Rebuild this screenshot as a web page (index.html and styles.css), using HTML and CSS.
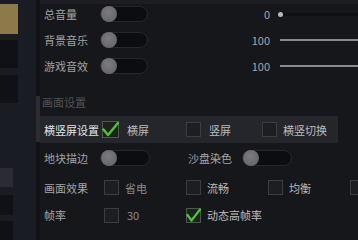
FILE: index.html
```html
<!DOCTYPE html>
<html lang="zh">
<head>
<meta charset="utf-8">
<link rel="stylesheet" href="styles.css">
</head>
<body>
<div class="app">
  <aside class="sidebar">
    <div class="tab gold"></div>
    <div class="tab dark t2"></div>
    <div class="tab dark t3"></div>
    <div class="tab small light t4"></div>
    <div class="tab small dark t5"></div>
    <div class="tab small dark t6"></div>
  </aside>
  <div class="rail"><div class="thumb"></div></div>
  <main class="main">
    <div class="row sound">
      <span class="label">总音量</span>
      <span class="toggle"><span class="knob"></span></span>
      <span class="value">0</span>
      <span class="slider"><span class="dot"></span></span>
    </div>
    <div class="row sound">
      <span class="label">背景音乐</span>
      <span class="toggle"><span class="knob"></span></span>
      <span class="value">100</span>
      <span class="slider full"></span>
    </div>
    <div class="row sound">
      <span class="label">游戏音效</span>
      <span class="toggle"><span class="knob"></span></span>
      <span class="value">100</span>
      <span class="slider full"></span>
    </div>

    <div class="section">画面设置</div>

    <div class="row orient">
      <span class="label bright">横竖屏设置</span>
      <span class="opt o1"><span class="box checked big"><svg viewBox="0 0 17 17" width="17" height="17"><path d="M1.5 8.5 L6 14 L16 2" fill="none" stroke="#52c23c" stroke-width="2.4" stroke-linecap="round" stroke-linejoin="round"/></svg></span><span class="otext bright">横屏</span></span>
      <span class="opt o2"><span class="box"></span><span class="otext bright">竖屏</span></span>
      <span class="opt o3"><span class="box"></span><span class="otext bright">横竖切换</span></span>
    </div>

    <div class="row rA">
      <span class="label">地块描边</span>
      <span class="toggle"><span class="knob"></span></span>
      <span class="label2">沙盘染色</span>
      <span class="toggle"><span class="knob"></span></span>
    </div>

    <div class="row rB">
      <span class="label">画面效果</span>
      <span class="opt q"><span class="box"></span><span class="otext dim">省电</span></span>
      <span class="opt q"><span class="box"></span><span class="otext">流畅</span></span>
      <span class="opt q"><span class="box"></span><span class="otext">均衡</span></span>
      <span class="opt q"><span class="box"></span></span>
    </div>

    <div class="row rC">
      <span class="label">帧率</span>
      <span class="opt q"><span class="box"></span><span class="otext dim n">30</span></span>
      <span class="opt q"><span class="box checked"><svg viewBox="0 0 15 15" width="15" height="15"><path d="M1.5 7 L5.5 12.5 L14 1.5" fill="none" stroke="#52c23c" stroke-width="2.2" stroke-linecap="round" stroke-linejoin="round"/></svg></span><span class="otext">动态高帧率</span></span>
    </div>
  </main>
</div>
</body>
</html>
```

FILE: styles.css
```css
* { box-sizing: border-box; }
html, body {
  margin: 0;
  padding: 0;
  width: 358px;
  height: 240px;
  overflow: hidden;
  background: #16171b;
  font-family: "Noto Sans CJK SC", "Noto Sans", sans-serif;
  font-size: 11px;
  color: #a9a9a9;
}
.app {
  display: flex;
  width: 358px;
  height: 240px;
  overflow: hidden;
}
.sidebar {
  width: 36px;
  flex: none;
  background: #1a1c23;
  display: flex;
  flex-direction: column;
  padding-top: 4px;
}
.tab { width: 18px; height: 28px; flex: none; }
.tab.gold { height: 30px; background: #8c7a4b; }
.tab.dark { background: #101116; }
.tab.small { width: 13px; }
.tab.light { background: #2a2b34; }
.t2 { margin-top: 6px; }
.t3 { margin-top: 7px; }
.t4 { margin-top: 65px; height: 19px; }
.t5 { margin-top: 8px; height: 20px; }
.t6 { margin-top: 6px; height: 19px; }

.rail {
  width: 4px;
  flex: none;
  background: #111216;
  padding-top: 96px;
}
.thumb {
  width: 4px;
  height: 46px;
  background: #2a2c32;
}

.main {
  flex: 1;
  min-width: 0;
  overflow: hidden;
  background: linear-gradient(#1d1e23 0 4px, #16171b 4px);
  padding-top: 1px;
}
.row {
  display: flex;
  align-items: center;
  padding-left: 4px;
  overflow: hidden;
}
.label {
  width: 56px;
  flex: none;
  white-space: nowrap;
  color: #a3a3a3;
}
.bright { color: #e4e4e4; }

.sound { height: 26px; }
.toggle {
  width: 48px;
  height: 16px;
  flex: none;
  border-radius: 8px;
  background: #0c0d10;
  border: 1px solid #26282d;
  display: flex;
  align-items: center;
  padding-left: 1px;
}
.knob {
  width: 16px;
  height: 16px;
  margin-left: -1px;
  border-radius: 50%;
  background: radial-gradient(circle at 45% 40%, #7b7b80, #5e5e63);
}
.value {
  width: 122px;
  flex: none;
  text-align: right;
  color: #a6a6a6;
}
.slider {
  flex: 1;
  height: 3px;
  margin-left: 8px;
  background: #0f1013;
  display: flex;
  align-items: center;
}
.slider.full {
  margin-left: 10px;
  height: 2px;
  background: #8a8a8c;
}
.dot {
  width: 5px;
  height: 5px;
  border-radius: 50%;
  background: #b9b9bb;
}

.section {
  margin-top: 12px;
  height: 22px;
  line-height: 22px;
  padding-left: 2px;
  color: #525255;
}

.orient {
  margin-top: 3px;
  height: 27px;
  width: 298px;
  background: #25262b;
}
.orient .label { width: 58px; }
.opt {
  display: flex;
  align-items: center;
  flex: none;
}
.o1 { width: 84px; }
.o2 { width: 76px; }
.box {
  width: 15px;
  height: 15px;
  flex: none;
  border: 1px solid #3c3d41;
  background: #1d1e22;
  position: relative;
}
.box.big { width: 17px; height: 17px; }
.box.checked { border-color: #4b5a48; background: #1d221d; }
.box svg {
  position: absolute;
  left: -1px;
  top: -1px;
}
.otext { margin-left: 8px; color: #bcbcbc; white-space: nowrap; }
.o3 .otext { margin-left: 6px; }
.dim { color: #8a8a8a; }

.rA { height: 30px; }
.rA .toggle { width: 50px; }
.label2 { width: 54px; margin-left: 38px; flex: none; color: #a3a3a3; white-space: nowrap; }

.rB { height: 29px; }
.rB .label, .rC .label { width: 60px; }
.q { width: 82px; }
.q .otext { margin-left: 6px; }
.q .otext.n { margin-left: 8px; }
.rC { height: 26px; }
```
